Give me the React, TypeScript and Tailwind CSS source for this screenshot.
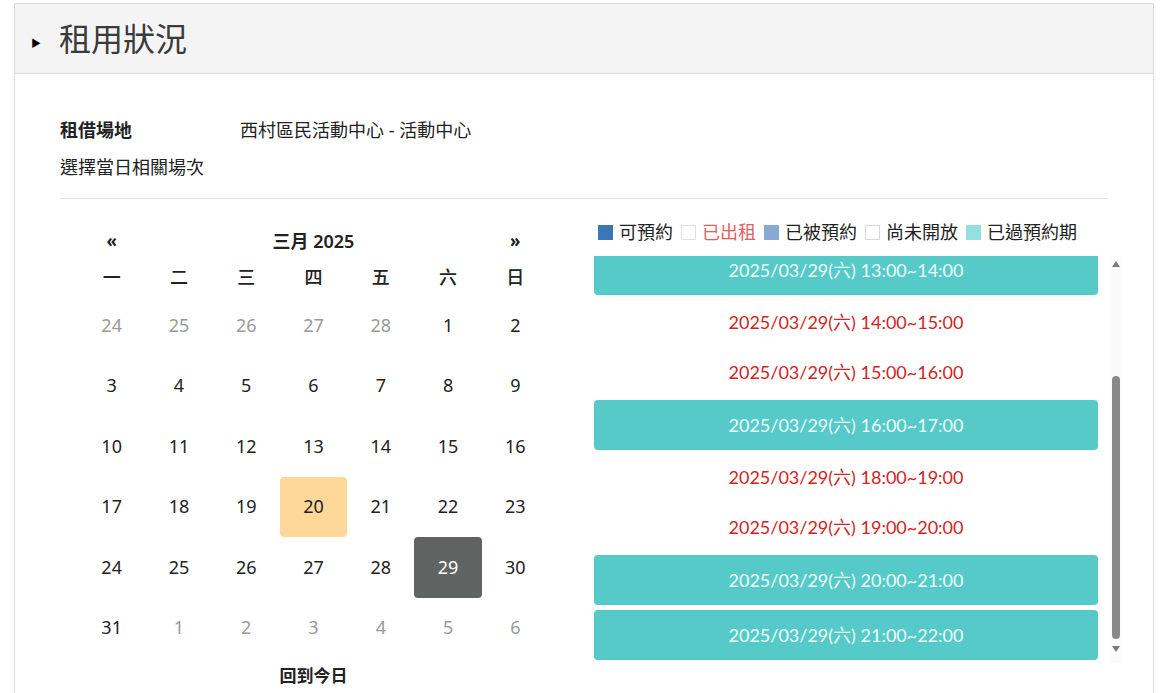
import React from "react";

const weekdays = ["一", "二", "三", "四", "五", "六", "日"];

const weeks: { d: number; muted?: boolean }[][] = [
  [{ d: 24, muted: true }, { d: 25, muted: true }, { d: 26, muted: true }, { d: 27, muted: true }, { d: 28, muted: true }, { d: 1 }, { d: 2 }],
  [{ d: 3 }, { d: 4 }, { d: 5 }, { d: 6 }, { d: 7 }, { d: 8 }, { d: 9 }],
  [{ d: 10 }, { d: 11 }, { d: 12 }, { d: 13 }, { d: 14 }, { d: 15 }, { d: 16 }],
  [{ d: 17 }, { d: 18 }, { d: 19 }, { d: 20 }, { d: 21 }, { d: 22 }, { d: 23 }],
  [{ d: 24 }, { d: 25 }, { d: 26 }, { d: 27 }, { d: 28 }, { d: 29 }, { d: 30 }],
  [{ d: 31 }, { d: 1, muted: true }, { d: 2, muted: true }, { d: 3, muted: true }, { d: 4, muted: true }, { d: 5, muted: true }, { d: 6, muted: true }],
];

const slots = [
  { t: "13:00~14:00", past: true },
  { t: "14:00~15:00", past: false },
  { t: "15:00~16:00", past: false },
  { t: "16:00~17:00", past: true },
  { t: "18:00~19:00", past: false },
  { t: "19:00~20:00", past: false },
  { t: "20:00~21:00", past: true },
  { t: "21:00~22:00", past: true },
];

const legend = [
  { label: "可預約", box: "bg-[#3a78b5] border-[#3a78b5]", text: "text-[#222]" },
  { label: "已出租", box: "bg-white border-[#e2e2e2]", text: "text-[#e06060]" },
  { label: "已被預約", box: "bg-[#86aad4] border-[#86aad4]", text: "text-[#222]" },
  { label: "尚未開放", box: "bg-white border-[#d8d8d8]", text: "text-[#222]" },
  { label: "已過預約期", box: "bg-[#94dfdf] border-[#94dfdf]", text: "text-[#222]" },
];

export default function App() {
  return (
    <div className="min-h-[693px] bg-white pt-[3px] pl-[14px] font-['Noto_Sans','Noto_Sans_CJK_TC',sans-serif] text-[#222]">
      <div className="w-[1140px] h-[700px] border border-[#dcdcdc] border-b-0">
        {/* header */}
        <div className="h-[70px] bg-[#f4f4f4] border-b border-[#dcdcdc] flex items-center pl-[16px]">
          <span className="text-[10px] text-black mt-[10px]">▶</span>
          <h2 className="ml-[18px] text-[32px] font-normal text-[#3a3a3a] leading-none">租用狀況</h2>
        </div>

        <div className="px-[45px] pt-[38px]">
          <div className="h-[37px] flex items-center text-[18px]">
            <span className="w-[180px] font-bold">租借場地</span>
            <span>西村區民活動中心 - 活動中心</span>
          </div>
          <div className="h-[37px] flex items-center text-[18px]">選擇當日相關場次</div>
          <div className="mt-[12px] border-t border-[#e6e6e6]" />

          <div className="flex">
            {/* calendar */}
            <div className="ml-[18px] w-[471px] shrink-0 mt-[24px]">
              <div className="h-[36px] grid grid-cols-7 items-center text-[17px]">
                <span className="text-center font-bold">«</span>
                <span className="col-span-5 text-center text-[18px] font-semibold">三月 2025</span>
                <span className="text-center font-bold">»</span>
              </div>
              <div className="h-[36px] grid grid-cols-7 items-center text-[18px] font-medium">
                {weekdays.map((w) => (
                  <span key={w} className="text-center">{w}</span>
                ))}
              </div>
              {weeks.map((wk, i) => (
                <div key={i} className="grid grid-cols-7 h-[60.5px]">
                  {wk.map((c, j) => {
                    const today = i === 3 && c.d === 20;
                    const sel = i === 4 && c.d === 29;
                    return (
                      <div
                        key={j}
                        className={
                          "flex items-center justify-center rounded-[4px] text-[18px] " +
                          (today
                            ? "bg-[#fdd898] text-[#222]"
                            : sel
                            ? "bg-[#5f6361] text-white"
                            : c.muted
                            ? "text-[#9a9a9a]"
                            : "text-[#222]")
                        }
                      >
                        {c.d}
                      </div>
                    );
                  })}
                </div>
              ))}
              <div className="h-[36px] flex items-center justify-center text-[17px] font-bold">回到今日</div>
            </div>

            {/* slots */}
            <div className="ml-[45px] w-[528px] shrink-0 mt-[23px]">
              <div className="h-[20px] flex items-center gap-[8px] pl-[4px] text-[18px] whitespace-nowrap">
                {legend.map((l) => (
                  <span key={l.label} className="flex items-center gap-[6px]">
                    <span className={"w-[15px] h-[15px] border " + l.box} />
                    <span className={l.text}>{l.label}</span>
                  </span>
                ))}
              </div>
              <div className="mt-[14px] h-[407px] flex">
                <div className="w-[504px] overflow-hidden">
                  <div className="-mt-[14px] flex flex-col font-['Lato','Noto_Sans_CJK_TC',sans-serif] text-[18px]">
                    {slots.map((s) =>
                      s.past ? (
                        <div
                          key={s.t}
                          className="mt-[3px] mb-[2px] h-[50px] rounded-[4px] bg-[#56c9c9] text-[#effefe] flex items-center justify-center"
                        >
                          2025/03/29(六) {s.t}
                        </div>
                      ) : (
                        <div key={s.t} className="h-[50px] text-[#d12424] flex items-center justify-center">
                          2025/03/29(六) {s.t}
                        </div>
                      )
                    )}
                  </div>
                </div>
                {/* scrollbar */}
                <div className="ml-[12px] w-[12px] bg-[#fafafa] flex flex-col items-center">
                  <svg width="10" height="8" viewBox="0 0 10 8" className="mt-[4px]">
                    <path d="M5 1 L9 7 L1 7 Z" fill="#7a7a7a" />
                  </svg>
                  <div className="mt-[108px] w-[8px] h-[263px] rounded-full bg-[#888]" />
                  <svg width="10" height="8" viewBox="0 0 10 8" className="mt-[6px]">
                    <path d="M1 1 L9 1 L5 7 Z" fill="#7a7a7a" />
                  </svg>
                </div>
              </div>
            </div>
          </div>
        </div>
      </div>
    </div>
  );
}
